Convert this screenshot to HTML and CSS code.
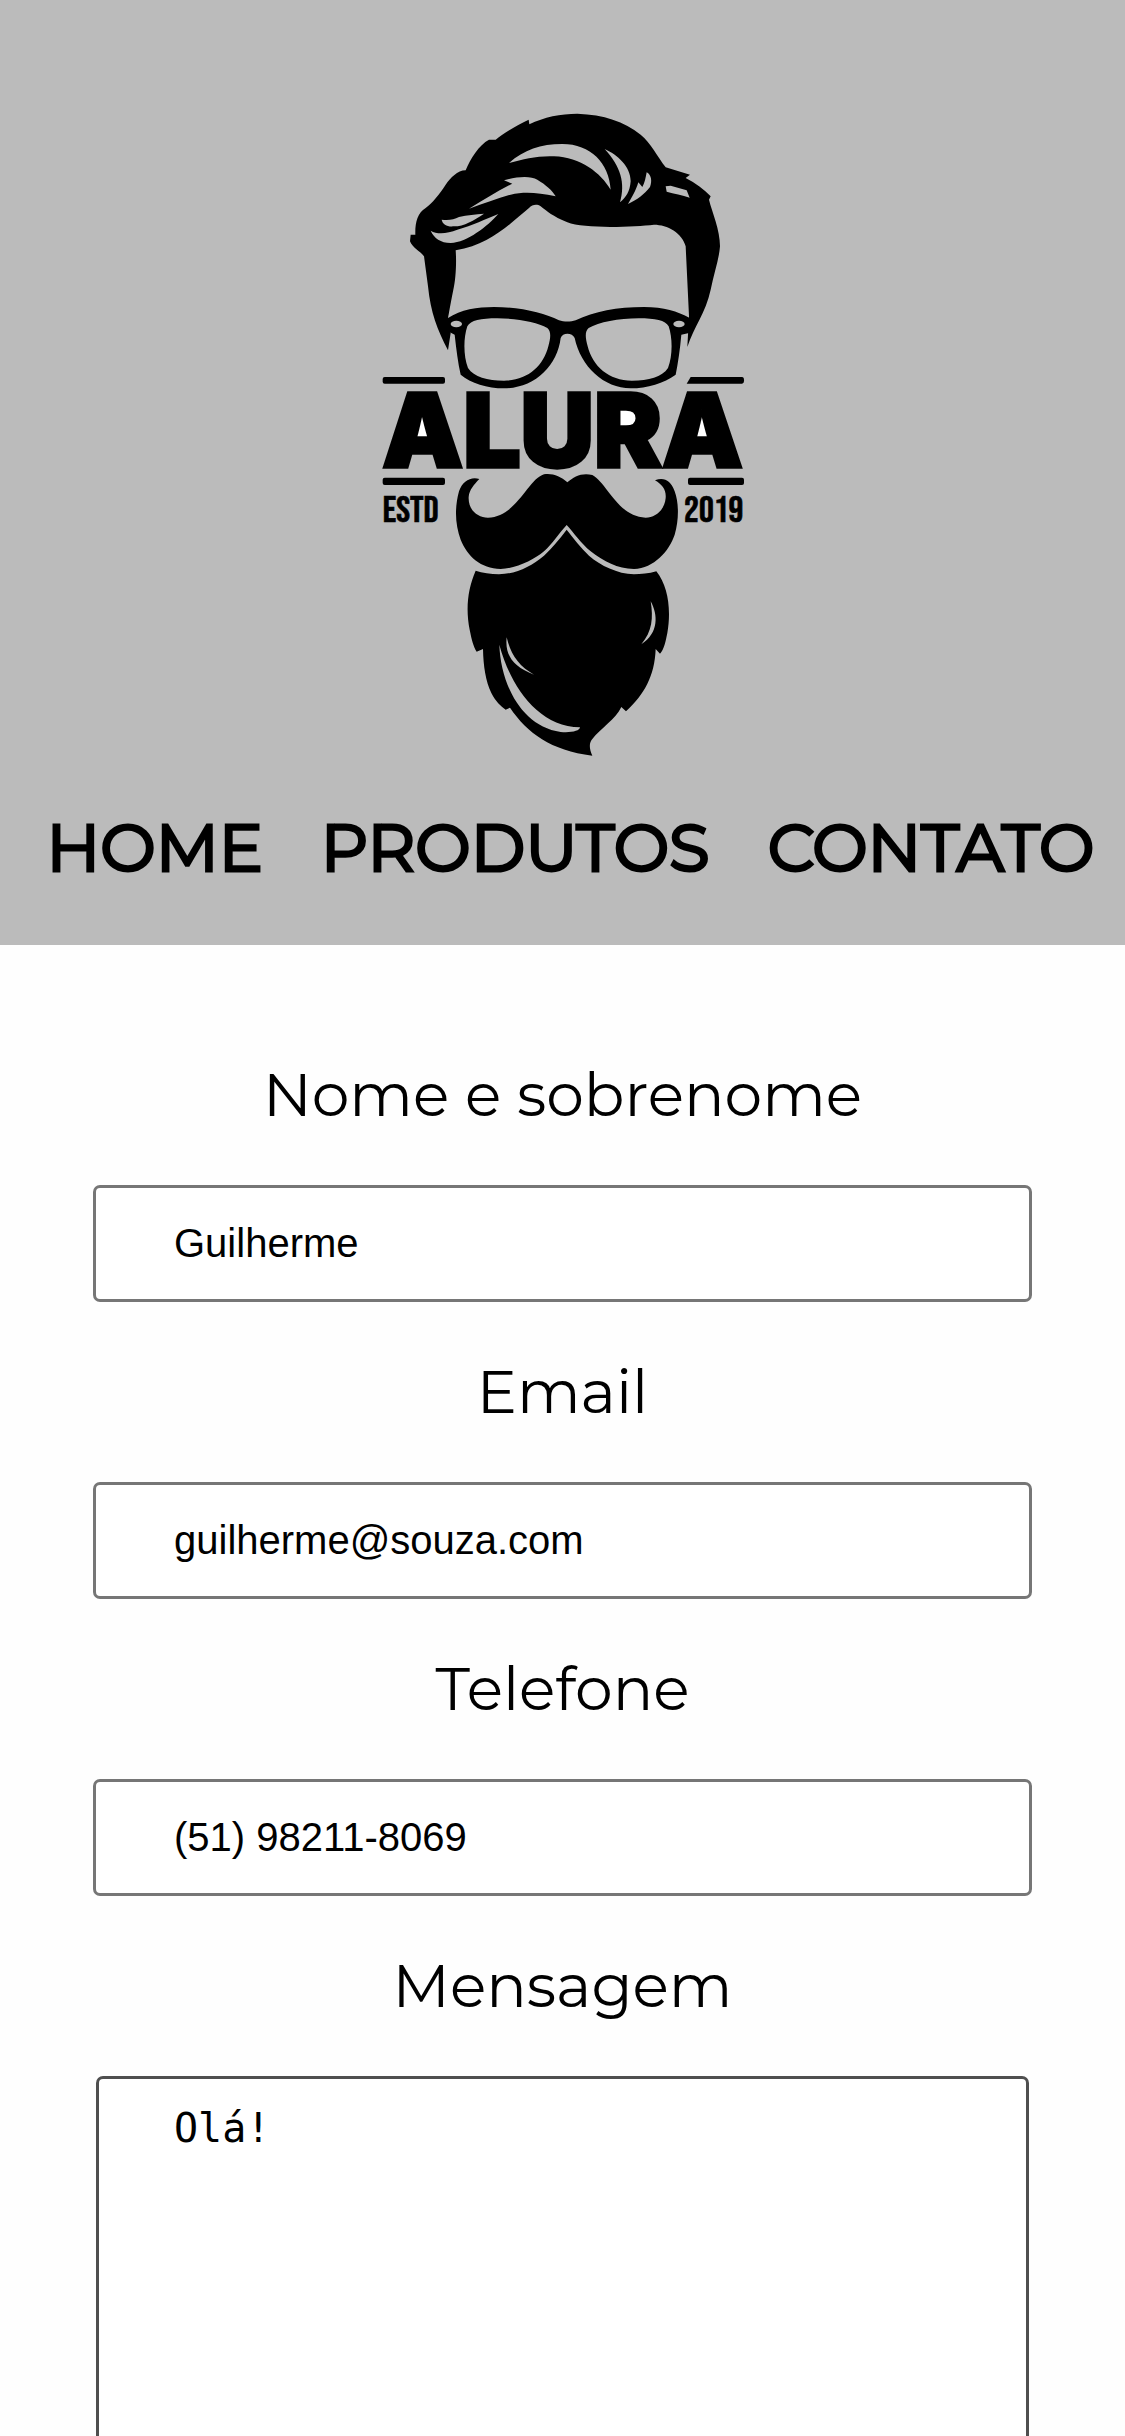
FILE: index.html
```html
<!DOCTYPE html>
<html lang="pt-BR">
<head>
<meta charset="utf-8">
<meta name="viewport" content="width=device-width">
<title>Contato - Barbearia Alura</title>
<link rel="stylesheet" href="styles.css">
</head>
<body>
<header class="header">
  <h1 class="brand">
    <svg class="logo" viewBox="28 40 1098 1929" role="img" aria-label="Barbearia Alura">
      <!-- hair -->
      <path d="M232 752C200 690 180 640 172 560L160 470C150 455 125 445 118 425L120 405L134 405C133 370 140 340 165 325C185 310 205 285 225 255C240 235 260 212 285 212C298 180 325 135 355 120L375 120C400 100 440 75 474 60L476 74C520 52 570 42 620 42C700 45 760 65 810 105C840 130 860 170 885 203L958 225L945 235C975 250 1000 270 1020 290L1015 300C1025 340 1048 390 1048 440C1045 480 1030 520 1020 570C1005 640 970 680 950 742L955 650L945 440C935 400 890 375 850 375C790 382 640 388 590 368C545 350 530 335 510 320C498 312 485 315 475 325C420 370 360 435 255 452C258 490 255 540 248 570C238 620 235 640 232 655L240 700Z"/>
      <g class="logo-shine">
        <path d="M415 190C460 150 510 133 575 133C660 133 715 190 720 270C690 220 630 172 550 170C500 168 460 178 415 190Z"/>
        <path d="M295 327C340 300 380 275 425 252L400 242C440 230 480 228 500 240C525 255 545 272 555 290C500 278 460 275 420 285C380 296 340 312 295 327Z"/>
        <path d="M213 360C235 362 250 360 265 352C290 345 315 345 340 342C310 362 280 380 250 380C230 382 216 375 213 360Z"/>
        <path d="M180 393C200 405 230 402 260 390C305 378 345 358 383 343C350 380 290 428 240 430C210 430 190 415 180 393Z"/>
        <path d="M702 148C740 165 780 200 780 245C778 275 765 295 748 308C765 250 750 200 702 148Z"/>
        <path d="M828 218C842 225 845 245 838 262C820 285 800 300 772 313C785 290 795 275 803 248L815 262C822 250 825 235 828 218Z"/>
        <path d="M885 260L900 258L948 272L957 294C935 285 910 283 888 276Z"/>
      </g>
      <!-- glasses -->
      <path fill-rule="evenodd" d="M232 655C270 630 320 622 370 622C450 622 520 640 565 662C580 667 600 667 615 662C670 635 740 622 820 622C880 622 920 635 957 655L955 700L932 705C928 750 922 790 915 825C880 850 830 866 780 866C700 866 630 800 612 715C605 698 575 698 570 715C560 800 490 866 400 866C350 866 300 850 270 825C262 790 257 750 252 705L232 695ZM290 680C278 715 278 770 292 805C310 832 350 843 400 843C470 843 518 800 533 740C540 715 542 695 530 685C500 668 440 656 380 656C330 656 300 662 290 680ZM894 680C884 662 854 656 804 656C744 656 684 668 654 685C642 695 644 715 651 740C666 800 714 843 784 843C834 843 874 832 892 805C906 770 906 715 894 680Z"/>
      <g class="logo-shine">
        <ellipse cx="257" cy="673" rx="17" ry="10"/>
        <ellipse cx="925" cy="673" rx="17" ry="10"/>
      </g>
      <!-- name plate -->
      <rect x="36" y="832" width="187" height="20" rx="6"/>
      <path d="M960 832H1114Q1120 832 1120 842T1114 852H948Z"/>
      <rect x="36" y="1134" width="187" height="22" rx="6"/>
      <rect x="952" y="1134" width="168" height="22" rx="6"/>
      <path class="logo-counter" d="M153 915L115 1055H191ZM1005 915L967 1055H1043ZM715 915H845V1000H715Z"/>
      <text class="logo-name" x="35" y="1101">ALURA</text>
      <text class="logo-small" x="36" y="1267">ESTD</text>
      <text class="logo-small" x="1118" y="1267" text-anchor="end">2019</text>
      <!-- moustache and beard -->
      <g transform="translate(0 1080)">
        <path d="M590 68C570 50 545 40 520 44C470 60 440 170 352 174C320 174 292 150 294 112C296 90 310 75 326 58C300 50 275 65 265 95C250 150 255 200 270 240C290 290 330 326 390 328C440 326 490 300 520 275C545 253 565 220 588 196C610 220 630 250 660 275C700 305 740 328 790 328C850 325 895 275 912 225C925 180 925 130 912 95C900 62 880 52 853 62C875 75 887 90 885 115C882 150 855 174 825 174C740 170 710 70 665 46C635 38 610 50 590 68Z"/>
        <path d="M588 210C565 240 545 265 520 288C480 320 440 342 385 344C360 342 335 340 315 333C290 390 285 450 297 510C303 540 308 560 318 576L337 568C338 620 345 665 362 700C375 725 390 740 405 750L418 744C470 820 540 872 665 888C655 865 655 850 665 838C690 805 735 780 752 742L766 755C820 705 852 650 855 568L868 582C880 570 885 545 890 520C902 450 893 380 857 335C835 342 810 344 790 344C740 342 690 318 655 288C630 265 608 235 588 210Z"/>
        <g class="logo-shine">
          <path d="M840 425C862 465 865 520 812 554C845 515 848 475 840 425Z"/>
          <path d="M408 533C420 585 445 620 490 645C430 622 402 590 408 533Z"/>
          <path d="M386 555C420 680 500 800 628 803C628 814 600 820 570 817C450 800 390 670 386 555Z"/>
        </g>
      </g>
    </svg>
  </h1>
  <nav>
    <ul class="menu">
      <li><a href="#home">Home</a></li>
      <li><a href="#produtos">Produtos</a></li>
      <li><a href="#contato">Contato</a></li>
    </ul>
  </nav>
</header>
<main class="main">
  <form class="form">
    <label for="nome">Nome e sobrenome</label>
    <input class="field" type="text" id="nome" value="Guilherme">
    <label for="email">Email</label>
    <input class="field" type="email" id="email" value="guilherme@souza.com">
    <label for="telefone">Telefone</label>
    <input class="field" type="tel" id="telefone" value="(51) 98211-8069">
    <label for="mensagem">Mensagem</label>
    <textarea class="message" id="mensagem">Olá!</textarea>
  </form>
</main>
</body>
</html>
```
FILE: styles.css
```css
* {
  box-sizing: border-box;
}

body {
  margin: 0;
  min-height: 100vh;
  display: flex;
  flex-direction: column;
  background: #fefefe;
  color: #000;
  font-family: Montserrat, Inter, sans-serif;
}

.header {
  display: flex;
  flex-direction: column;
  align-items: center;
  gap: 52px;
  padding: 113px 0 57px;
  background: #bbb;
}

.brand {
  margin: 0;
}

.logo {
  display: block;
  width: 366px;
}

.logo-shine {
  fill: #bbb;
}

.logo-counter {
  fill: #fff;
}

.logo-name {
  font: 900 305px Inter, sans-serif;
  stroke: #000;
  stroke-width: 10px;
}

.logo-small {
  font: 400 111px "Bebas Neue", Oswald, "Roboto Condensed", "DejaVu Sans Condensed", sans-serif;
  stroke: #000;
  stroke-width: 2px;
}

.menu {
  display: flex;
  justify-content: center;
  gap: 58px;
  margin: 0;
  padding: 0 0 0 16px;
  list-style: none;
}

.menu a {
  color: inherit;
  font-size: 66px;
  line-height: 80px;
  text-transform: uppercase;
  text-decoration: none;
  -webkit-text-stroke: 3px #000;
}

.main {
  flex: 1;
  display: flex;
  padding: 114px 93px 0;
}

.form {
  flex: 1;
  display: flex;
  flex-direction: column;
}

.form label {
  margin-bottom: 54px;
  font-size: 60px;
  line-height: 72px;
  text-align: center;
}

.field {
  width: 100%;
  height: 117px;
  margin: 0 0 54px;
  padding: 0 78px;
  border: 3px solid #767676;
  border-radius: 7px;
  background: #fff;
  color: #000;
  font: 40px "Liberation Sans", Arial, sans-serif;
}

.message {
  flex: 1;
  min-height: 360px;
  margin: 0 3px;
  padding: 26px 75px;
  border: 3px solid #4f4f4f;
  border-bottom: 0;
  border-radius: 7px 7px 0 0;
  background: #fff;
  color: #000;
  font: 40px "DejaVu Sans Mono", monospace;
  resize: none;
}
```
